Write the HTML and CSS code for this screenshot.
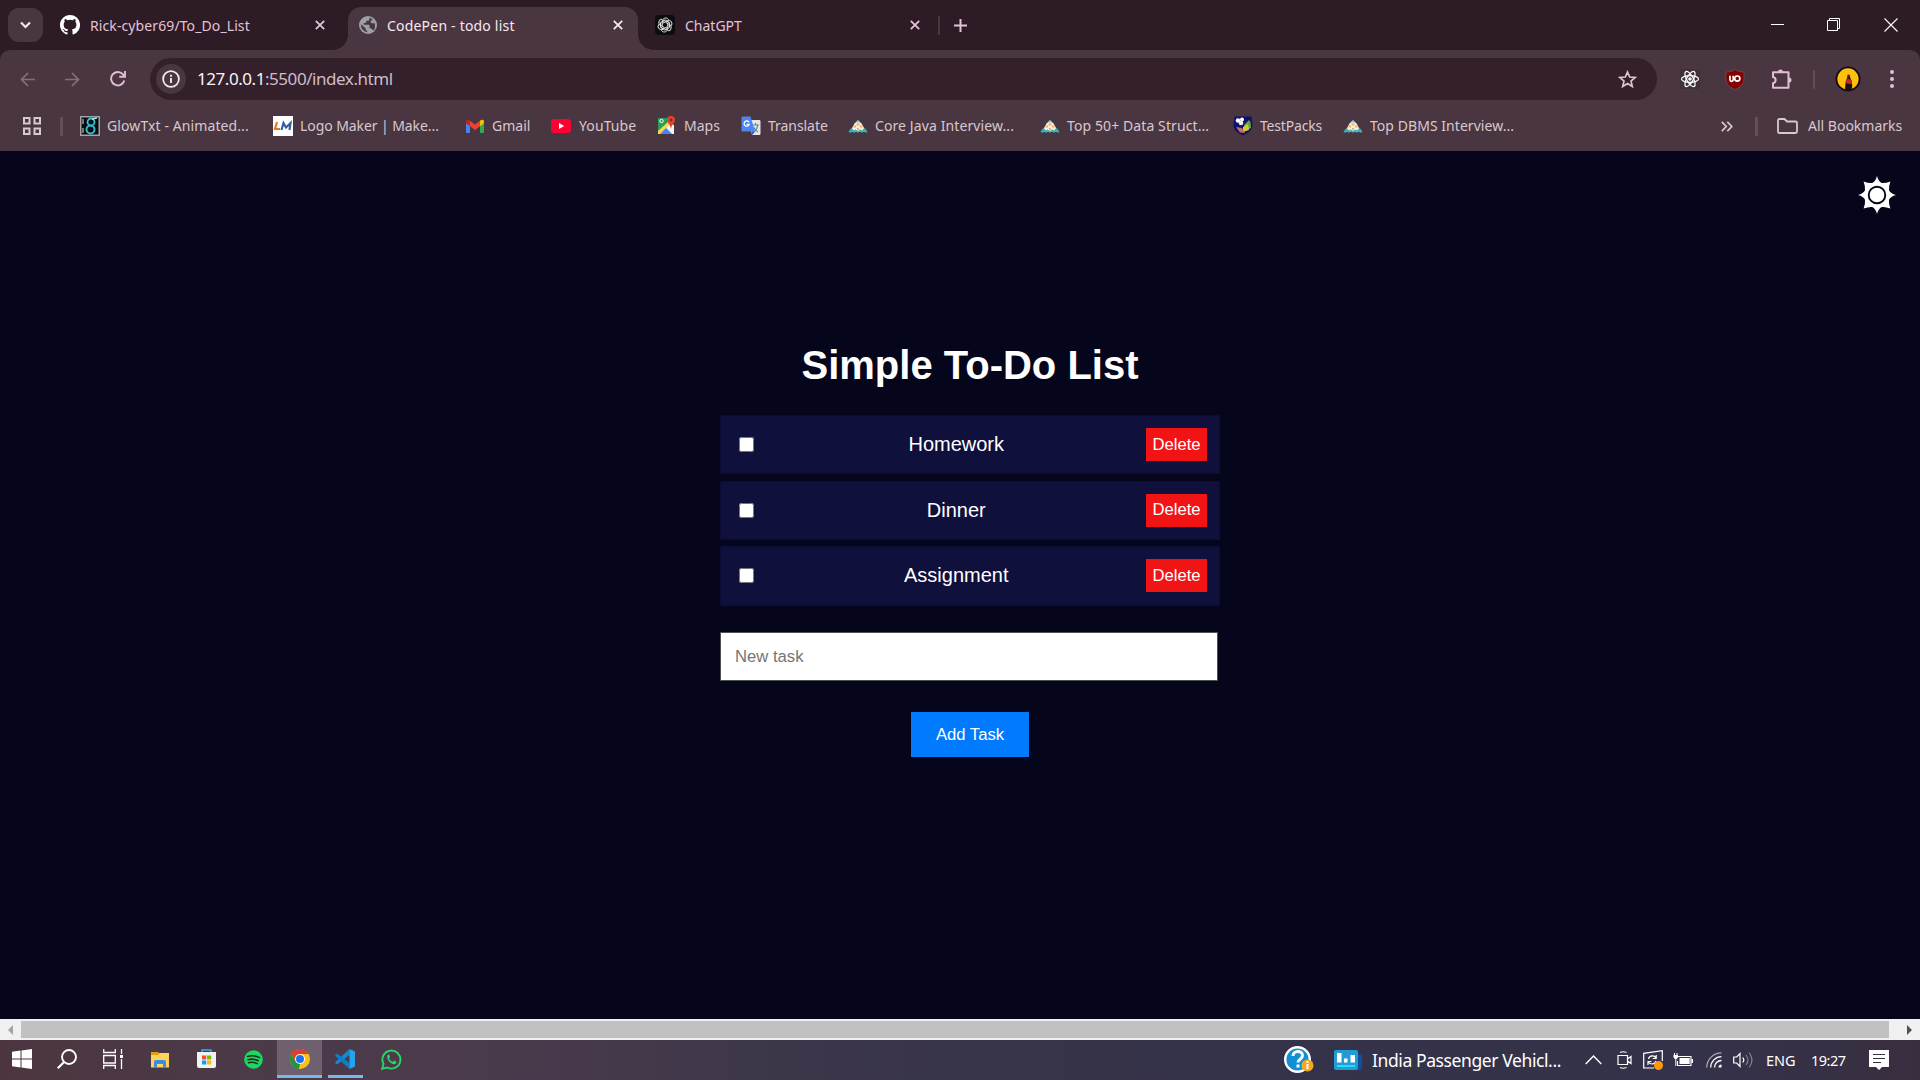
FILE: index.html
```html
<!DOCTYPE html>
<html lang="en">
<head>
<meta charset="utf-8">
<title>CodePen - todo list</title>
<link rel="stylesheet" href="styles.css">
</head>
<body>
<svg width="0" height="0" class="defs">
  <defs>
    <symbol id="x" viewBox="0 0 10 10"><path d="M.8.8l8.4 8.4M9.2.8L.8 9.2" fill="none" stroke="currentColor" stroke-width="1.8"/></symbol>
    <symbol id="pyramid" viewBox="0 0 20 20"><path d="M10 4.500l3.500 3 4.500 8H2l4.500-8z" fill="#f6efe6"/><path d="M10 4l2.500 2.500h-5z" fill="#7fd4d6"/><path d="M8.500 7.500h3v2h-3zM5.500 9.500h2.500v2H5.500zM12 9.500h2.500v2H12zM9 12h2v2H9z" fill="#f5ad58"/><path d="M.5 16l2-3.200h2L6 14.500 7.500 13.500 10 15l2.500-1.500L14 14.500l1.500-1.700h2l2 3.200-1.500.7-2-.9-2 .9-2-.9-2 .9-2-.9-2 .9-2-.9-1.500.9z" fill="#35b5b8"/></symbol>
  </defs>
</svg>

<header class="tabstrip">
  <button class="tab-search"><svg width="11" height="8" viewBox="0 0 11 8"><path d="M1 1.500l4.500 4.500L10 1.500" fill="none" stroke="currentColor" stroke-width="2.200"/></svg></button>
  <div class="tab tab-first">
    <svg width="20" height="20" viewBox="0 0 16 16"><path fill="#fff" d="M8 0C3.580 0 0 3.580 0 8c0 3.540 2.290 6.530 5.470 7.590.4.070.55-.17.55-.38v-1.490c-2.010.37-2.530-.49-2.690-.94-.09-.23-.48-.94-.82-1.130-.28-.15-.68-.52-.01-.53.63-.01 1.080.58 1.230.82.72 1.210 1.870.87 2.330.66.070-.52.28-.87.51-1.070-1.780-.2-3.640-.89-3.640-3.950 0-.87.31-1.590.82-2.150-.08-.2-.36-1.020.08-2.120 0 0 .67-.21 2.200.82a7.600 7.600 0 0 1 4 0c1.530-1.040 2.200-.82 2.200-.82.44 1.100.16 1.920.08 2.120.51.56.82 1.270.82 2.150 0 3.070-1.870 3.750-3.650 3.950.29.25.54.73.54 1.480v2.200c0 .21.15.46.55.38A8 8 0 0 0 8 0z"/></svg>
    <span class="tab-title t-repo">Rick-cyber69/To_Do_List</span>
    <svg class="close" width="10" height="10"><use href="#x"/></svg>
  </div>
  <div class="tab tab-active">
    <svg width="18" height="18" viewBox="0 0 18 18"><circle cx="9" cy="9" r="9" fill="#9aa0a6"/><path d="M10.500 1.800v1.400c0 .9-.7 1.500-1.600 1.500H7.200v1.600c0 .5-.4.800-.9.800H4.700v1.700h5c.5 0 .9.400.9.900v2.500h.8c.8 0 1.400.5 1.600 1.200l1.800 1A7.300 7.300 0 0 0 16 9.500c0-.8-.1-1.500-.3-2.200h-2.500c-.8 0-1.400-.6-1.400-1.400V4.500L14 4A7.200 7.200 0 0 0 10.500 1.800zM1.900 8.200A7.200 7.200 0 0 0 8.200 16.200v-1.500c-.9 0-1.600-.7-1.600-1.600v-.8z" fill="#4a3641"/></svg>
    <span class="tab-title t-codepen">CodePen - todo list</span>
    <svg class="close" width="10" height="10"><use href="#x"/></svg>
  </div>
  <div class="tab tab-last">
    <svg width="20" height="20" viewBox="0 0 20 20"><rect width="20" height="20" rx="4" fill="#0d0d0d"/><g fill="none" stroke="#e6e6e6" stroke-width=".9"><path id="petal" d="M7.400 10.800V6.500c0-4 5-4.700 6.200-1.600M7.400 6.800l3-1.700 4 2.300"/><use href="#petal" transform="rotate(60 10 10)"/><use href="#petal" transform="rotate(120 10 10)"/><use href="#petal" transform="rotate(180 10 10)"/><use href="#petal" transform="rotate(240 10 10)"/><use href="#petal" transform="rotate(300 10 10)"/></g></svg>
    <span class="tab-title t-gpt">ChatGPT</span>
    <svg class="close" width="10" height="10"><use href="#x"/></svg>
  </div>
  <i class="tab-divider"></i>
  <svg class="new-tab" width="13" height="13" viewBox="0 0 13 13"><path d="M6.500 0v13M0 6.500h13" stroke="currentColor" stroke-width="2"/></svg>
  <div class="window-buttons">
    <svg width="13" height="14"><path d="M0 6.500h13" stroke="#fff"/></svg>
    <svg width="13" height="13"><path d="M.5 2.500h10v10H.5zM2.500 2.500v-2h10v10h-2" fill="none" stroke="#fff"/></svg>
    <svg width="14" height="14"><path d="M.5.5l13 13M13.500.5l-13 13" stroke="#fff" stroke-width="1.100"/></svg>
  </div>
</header>

<section class="toolbar">
  <nav class="nav-buttons">
    <svg class="dim" width="15" height="15" viewBox="0 0 15 15"><path d="M15 7.500H1.500M8 1L1.500 7.500 8 14" fill="none" stroke="currentColor" stroke-width="1.700"/></svg>
    <svg class="dim" width="15" height="15" viewBox="0 0 15 15"><path d="M0 7.500h13.500M7 1l6.500 6.500L7 14" fill="none" stroke="currentColor" stroke-width="1.700"/></svg>
    <svg width="16" height="16" viewBox="0 0 16 16"><path d="M14.300 9.500A6.700 6.700 0 1 1 12.800 3.200L14.500 5M15 0v5.800H9.300" fill="none" stroke="currentColor" stroke-width="1.900"/></svg>
  </nav>
  <div class="omnibox">
    <span class="site-info"><svg width="18" height="18" viewBox="0 0 18 18"><circle cx="9" cy="9" r="7.900" fill="none" stroke="currentColor" stroke-width="1.800"/><path d="M9 8v5M9 4.800v2" stroke="currentColor" stroke-width="1.900"/></svg></span>
    <span class="url"><b>127.0.0.1</b>:5500/index.html</span>
    <svg class="star" width="19" height="18" viewBox="0 0 19 18"><path d="M9.500 2l2.200 5 5.500.5-4.200 3.600 1.300 5.400-4.800-2.900-4.800 2.900L6 11.100 1.800 7.500 7.300 7z" fill="none" stroke="currentColor" stroke-width="1.700"/></svg>
  </div>
  <div class="extensions">
    <svg width="20" height="20" viewBox="0 0 20 20"><rect width="20" height="20" rx="2" fill="#40303a"/><g fill="none" stroke="#fff" stroke-width="1.200"><ellipse cx="10" cy="10" rx="8.500" ry="3.300"/><ellipse cx="10" cy="10" rx="8.500" ry="3.300" transform="rotate(60 10 10)"/><ellipse cx="10" cy="10" rx="8.500" ry="3.300" transform="rotate(120 10 10)"/></g><circle cx="10" cy="10" r="1.800" fill="#fff"/></svg>
    <svg width="20" height="21" viewBox="0 0 20 21"><path d="M10 .5c2.500 1.800 5.500 2.500 9 2.500v7c0 5-4 8.500-9 10.500C5 18.500 1 15 1 10V3c3.500 0 6.500-.7 9-2.500z" fill="#800000" stroke="#7c4a52" stroke-width=".8"/><path d="M5 6.800v4c0 1 .6 1.500 1.500 1.500s1.700-.5 1.700-1.500v-4" fill="none" stroke="#fff" stroke-width="1.700"/><circle cx="12.300" cy="9.600" r="2.600" fill="none" stroke="#fff" stroke-width="1.700"/></svg>
    <svg width="22" height="21" viewBox="0 0 22 21"><path d="M2 3.300h15.500v15.500H2v-4.600c3.500-.5 3.500-5.700 0-6.200z" fill="none" stroke="currentColor" stroke-width="2" stroke-linejoin="round"/><path d="M7 3a2.500 2.500 0 0 1 5 0zM18 8.500a2.500 2.500 0 0 1 0 5z" fill="currentColor"/></svg>
    <i class="bar-divider slim"></i>
    <svg width="26" height="26" viewBox="0 0 26 26"><circle cx="13" cy="13" r="11.600" fill="#ffbf0a" stroke="#120d18" stroke-width="1.900"/><path d="M10 24l.3-5 1-5 1.900-4.500 1.500.5 1.500 4.500 1 5-.2 4.500z" fill="#1c1015"/><path d="M10.500 15.500l2.500-3 4 2v3l-2.500.5-4-1z" fill="#c02c2c"/><circle cx="13.600" cy="10" r="1.500" fill="#4b2710"/></svg>
    <svg width="4" height="18"><g fill="currentColor"><circle cx="2" cy="2" r="2"/><circle cx="2" cy="9" r="2"/><circle cx="2" cy="16" r="2"/></g></svg>
  </div>
</section>

<nav class="bookmarks">
  <svg class="apps" width="18" height="18" viewBox="0 0 18 18"><path d="M1 1h5.500v5.500H1zM11.500 1H17v5.500h-5.500zM1 11.500h5.500V17H1zM11.500 11.500H17V17h-5.500z" fill="none" stroke="currentColor" stroke-width="2"/></svg>
  <i class="bar-divider"></i>
  <a><svg width="20" height="20" viewBox="0 0 20 20"><rect x=".75" y=".75" width="18.500" height="18.500" fill="#080c10" stroke="#a3a3a3" stroke-width="1.500"/><path d="M3 3v5M3 12v5" stroke="#777" stroke-width="2"/><circle cx="11" cy="6" r="3.500" fill="none" stroke="#37c5d8" stroke-width="1.800"/><circle cx="10.500" cy="13.500" r="4" fill="none" stroke="#35b9cd" stroke-width="2"/><path d="M12 3l5-1" stroke="#a5eef5" stroke-width="1.500"/></svg><span class="b1">GlowTxt - Animated...</span></a>
  <a><svg width="20" height="20" viewBox="0 0 20 20"><path fill="#fff" d="M0 0h20v20H0z"/><path d="M4 6L2 13h5" fill="none" stroke="#e07a20" stroke-width="2.200"/><path d="M8.500 14l2-7 2.500 4.500L17.500 7l-1 7" fill="none" stroke="#355f9c" stroke-width="2.200"/></svg><span class="b2">Logo Maker | Make...</span></a>
  <a><svg width="20" height="20" viewBox="0 0 20 20"><path d="M1 5.500l4 3V17H2.300C1.500 17 1 16.500 1 15.700z" fill="#4285f4"/><path d="M15 8.500l4-3v10.200c0 .8-.5 1.300-1.300 1.300H15z" fill="#34a853"/><path d="M15 4.700C17 3 19 3.700 19 5.500v1.700l-4 3z" fill="#fbbc04"/><path d="M5 4.700l5 3.800 5-3.800v5.500L10 14l-5-3.800z" fill="#ea4335"/><path d="M5 4.700C3 3 1 3.700 1 5.500v1.700l4 3z" fill="#c5221f"/></svg><span class="b3">Gmail</span></a>
  <a><svg width="20" height="20" viewBox="0 0 20 20"><rect y="3" width="20" height="14" rx="3.500" fill="#ff0033"/><path d="M8 7l5.200 3L8 13z" fill="#fff"/></svg><span class="b4">YouTube</span></a>
  <a><svg width="20" height="20" viewBox="0 0 20 20"><path d="M1 2h15v16H1z" fill="#2d9b58"/><path d="M1 18L15 4l2 14z" fill="#dfe4e8"/><path d="M1 15L12 5l2 2L3 18H1z" fill="#fdd54a"/><path d="M3 18l6-6 6 6z" fill="#4285f4"/><path d="M9.500 11.500L16 18h1V9l-3-1z" fill="#f5f5f5"/><circle cx="4.500" cy="5" r="1.700" fill="none" stroke="#fff"/><path d="M14 0a4 4 0 0 1 4 4c0 2.500-3 4-4 8.500-1-4.500-4-6-4-8.500a4 4 0 0 1 4-4z" fill="#e34133"/><circle cx="14" cy="4" r="1.400" fill="#8d251d"/></svg><span class="b5">Maps</span></a>
  <a><svg width="20" height="20" viewBox="0 0 20 20"><path d="M8 4h10c1 0 1.500.5 1.500 1.500v12c0 1-.5 1.500-1.500 1.500h-7z" fill="#e3e5e8"/><path d="M11 9h7M14.500 7v2M12.500 16c2-1 3.800-3.500 4-7M12.500 11c1 2.500 2.500 4 4.500 5" fill="none" stroke="#6d7c88" stroke-width="1.100"/><path d="M2 .5h7.500L14 15.500H2C1 15.500.5 15 .5 14V2C.5 1 1 .5 2 .5z" fill="#4d86ef"/><path d="M10.500 15.500H14L11.500 19z" fill="#2a56c6"/><path d="M8 6.300A2.600 2.600 0 1 0 8.200 8.400H5.800" fill="none" stroke="#fff" stroke-width="1.300"/></svg><span class="b6">Translate</span></a>
  <a><svg width="20" height="20"><use href="#pyramid"/></svg><span class="b7">Core Java Interview...</span></a>
  <a><svg width="20" height="20"><use href="#pyramid"/></svg><span class="b8">Top 50+ Data Struct...</span></a>
  <a><svg width="20" height="20" viewBox="0 0 20 20"><path d="M1.500.5h17l1 8c0 6-4 8.500-9.500 11-5.500-2.500-9.500-5-9.500-11z" fill="#101070"/><circle cx="5" cy="4.500" r="2.300" fill="#fff"/><circle cx="9" cy="3.500" r="2" fill="#fff"/><circle cx="8" cy="7" r="2.300" fill="#eee"/><path d="M11 9l5-5 1.500 2 .5 6-6 3z" fill="#61a83b"/><path d="M10 11l5-3 1 6-6 2z" fill="#d9c932"/><path d="M3 11l6 1 3 5-5-.5z" fill="#bd7354"/></svg><span class="b9">TestPacks</span></a>
  <a><svg width="20" height="20"><use href="#pyramid"/></svg><span class="b10">Top DBMS Interview...</span></a>
  <svg width="12" height="11" viewBox="0 0 12 11"><path d="M.8.8l4.500 4.700L.8 10.200M6.300.8l4.500 4.700-4.500 4.700" fill="none" stroke="currentColor" stroke-width="1.700"/></svg>
  <i class="bar-divider"></i>
  <a class="all"><svg width="21" height="16" viewBox="0 0 21 16"><path d="M1 13V2.500Q1 1 2.500 1h5l2.500 2.500h8.500Q20 3.500 20 5v8.500q0 1.500-1.500 1.500h-16Q1 15 1 13.500z" fill="none" stroke="currentColor" stroke-width="1.800"/></svg><span class="b11">All Bookmarks</span></a>
</nav>

<main class="page">
  <svg class="theme-toggle" width="38" height="38" viewBox="-19 -19 38 38"><path fill="#fff" d="M0-19Q1.500-13.500 4.800-12 8-11.500 13.400-13.400 11.500-8 12-4.800 13.500-1.500 19 0 13.500 1.500 12 4.800 11.500 8 13.400 13.400 8 11.500 4.800 12 1.500 13.500 0 19-1.500 13.500-4.800 12-8 11.500-13.400 13.400-11.500 8-12 4.800-13.500 1.500-19 0-13.500-1.500-12-4.800-11.500-8-13.400-13.400-8-11.500-4.800-12-1.500-13.500 0-19z"/><circle r="8.300" fill="#fff" stroke="#05051b" stroke-width="1.900"/></svg>
  <div class="todo">
    <h1>Simple To-Do List</h1>
    <ul>
      <li><input type="checkbox"><span>Homework</span><button>Delete</button></li>
      <li><input type="checkbox"><span>Dinner</span><button>Delete</button></li>
      <li><input type="checkbox"><span>Assignment</span><button>Delete</button></li>
    </ul>
    <input class="new-task" type="text" placeholder="New task">
    <button class="add-task">Add Task</button>
  </div>
</main>

<div class="scrollbar">
  <svg width="5" height="10"><path d="M5 0v10L0 5z" fill="#a3a3a3"/></svg>
  <i></i>
  <svg width="5" height="10"><path d="M0 0v10l5-5z" fill="#505050"/></svg>
</div>

<footer class="taskbar">
  <div class="apps-row">
    <span><svg width="20" height="20" viewBox="0 0 20 20"><path fill="#fff" d="M0 2.700l8.500-1.200v8H0zM9.500 1.400L20 0v9.500H9.500zM0 10.500h8.500v8L0 17.300zM9.500 10.500H20V20L9.500 18.600z"/></svg></span>
    <span><svg width="20" height="20" viewBox="0 0 20 20"><circle cx="12" cy="8" r="7" fill="none" stroke="#fff" stroke-width="1.900"/><path d="M7 13L.8 19.200" stroke="#fff" stroke-width="2.200"/></svg></span>
    <span><svg width="21" height="20" viewBox="0 0 21 20"><path d="M.7 0v3.500h11.600V0M.7 20v-3.500h11.600V20M.7 6.500h11.600v7.500H.7zM18.500 0v5M18.500 10v10" fill="none" stroke="#fff" stroke-width="1.300"/><path d="M17 6h3v3h-3z" fill="#fff"/></svg></span>
    <span><svg width="19" height="17" viewBox="0 0 19 17"><path d="M0 1h7l2 2v4H0z" fill="#e09d0c"/><path d="M0 4h7l1.500-2H18v14.500H0z" fill="#ffd35c"/><path d="M3 17V11q0-2 2-2h8q2 0 2 2v6h-3v-4H6v4z" fill="#3c8ddd"/></svg></span>
    <span><svg width="19" height="20" viewBox="0 0 19 20"><path d="M5 4V1h9v3" fill="none" stroke="#2fb3ea" stroke-width="1.400"/><path d="M0 3h19v14q0 2-2 2H2q-2 0-2-2z" fill="#f1f1f3"/><path d="M5 6.500h4.200v4H5z" fill="#f25022"/><path d="M10 6.500h4.200v4H10z" fill="#7fba00"/><path d="M5 11.500h4.200v4H5z" fill="#00a4ef"/><path d="M10 11.500h4.200v4H10z" fill="#ffb900"/></svg></span>
    <span><svg width="19" height="19" viewBox="0 0 19 19"><circle cx="9.500" cy="9.500" r="9.300" fill="#1ed760"/><path d="M3.500 6.500c4-1.200 8.500-.8 12 1.100M4 9.700c3.500-1 7-.6 10.300 1M4.500 12.700c3-.7 5.800-.5 8.700.9" fill="none" stroke="#16331f" stroke-width="1.600" stroke-linecap="round"/></svg></span>
    <span class="current"><svg width="20" height="20" viewBox="0 0 20 20"><circle cx="10" cy="10" r="10" fill="#fbc116"/><path d="M1.300 5A10 10 0 0 1 18.700 5H10v5L5.700 12.500z" fill="#e33b2e"/><path d="M1.300 5l4.400 7.500L10 15l-1 4.900A10 10 0 0 1 1.300 5z" fill="#229342"/><path d="M14.300 12.500L10 20H9l3-6z" fill="#fbc116"/><circle cx="10" cy="10" r="5" fill="#fff"/><circle cx="10" cy="10" r="4" fill="#1a73e8"/></svg></span>
    <span class="open"><svg width="20" height="20" viewBox="0 0 20 20"><path d="M14.500 0v6L2 15.500.3 14v-1z" fill="#1689cf"/><path d="M14.500 20v-6L2 4.500.3 6v1z" fill="#0f7fc6"/><path d="M14.500 0L20 2.500v15L14.500 20z" fill="#27a3ee"/></svg></span>
    <span><svg width="21" height="21" viewBox="0 0 21 21"><path d="M1.200 19.800l1.300-4.900a9 9 0 1 1 3.600 3.600z" fill="none" stroke="#2bd368" stroke-width="1.900"/><path d="M7.300 5.500c-3 2.500.7 9 5.700 9.800 1.600.1 2.500-1 2.500-2.500l-2.600-1.300-1.300 1.400c-1.700-.7-2.900-1.900-3.600-3.600l1.100-1.200L8.200 5.500z" fill="#2bd368"/></svg></span>
  </div>
  <div class="tray">
    <svg width="30" height="28" viewBox="0 0 30 28"><circle cx="13.500" cy="13.500" r="12.300" fill="#0f91d4" stroke="#fff" stroke-width="2.400"/><path d="M9 10c0-6 9.500-6 9.500-.5 0 4-4.500 3.500-4.500 7M14 18.500v3" fill="none" stroke="#fff" stroke-width="3"/><circle cx="23.500" cy="19.500" r="6" fill="#f7a81b"/><path d="M23.500 18v5M23.500 15v2" stroke="#fff" stroke-width="2"/></svg>
    <svg width="28" height="21" viewBox="0 0 28 21"><path d="M22 4h3q3 0 3 3v10q0 3-3 3h-3z" fill="#0d4fa0"/><rect width="24" height="20" rx="2" fill="#239bd3"/><path d="M3 3h4.500v9.500H3zM10 8.500h3.500v4H10zM16.500 5H21v7.500h-4.500z" fill="#fff"/><path d="M3 16h18" stroke="#24e0f8" stroke-width="2"/></svg>
    <span class="news">India Passenger Vehicl...</span>
    <svg width="17" height="10" viewBox="0 0 17 10"><path d="M.7 9l7.800-8 7.800 8" fill="none" stroke="#fff" stroke-width="1.400"/></svg>
    <svg width="15" height="18" viewBox="0 0 15 18"><path d="M1 4.500h9.500v9H1zM10.500 8l3.500-2.500v7L10.500 10M3 1.500q3-1.500 6.500 0M3 16.500q3 1.500 6.500 0" fill="none" stroke="#fff" stroke-width="1.200"/></svg>
    <svg width="20" height="20" viewBox="0 0 20 20"><path d="M11 18H.7V3.300L19.300.7V11" fill="none" stroke="#fff" stroke-width="1.200"/><path d="M5.500 9c1-4 6-4 7.500-1M13.200 5v3.500h-3.500M13 11c-1 3.500-5.500 4-7.500 1M5 15v-3.500h3.500" fill="none" stroke="#fff" stroke-width="1.200"/><circle cx="15.500" cy="15.500" r="4.500" fill="#ff9808"/></svg>
    <svg width="20" height="14" viewBox="0 0 20 14"><path d="M5 3.500h13v9H4.500V8" fill="none" stroke="#fff" stroke-width="1.100"/><path d="M6.500 5h10.200v6H6.500zM18.500 6h1.500v4h-1.500zM.5 2H5v2.500L3.500 6H2L.5 4.500zM1 0h1v2H1zM3.500 0h1v2h-1zM2.300 6h1v7h-1z" fill="#fff"/></svg>
    <svg width="16" height="16" viewBox="0 0 16 16"><g fill="none" stroke-width="1.300"><path d="M.8 15.500A14.700 14.700 0 0 1 15.500.8" stroke="#aaa6b0"/><path d="M4.700 15.500A10.800 10.800 0 0 1 15.500 4.700M8.500 15.500a7 7 0 0 1 7-7" stroke="#fff"/></g><path d="M12.500 15.500a3 3 0 0 1 3-3v3z" fill="#fff"/></svg>
    <svg width="20" height="18" viewBox="0 0 20 18"><path d="M.7 6h3L7 2.500v13L3.700 12h-3z" fill="none" stroke="#fff" stroke-width="1.200"/><path d="M9.800 6.500q2 2.500 0 5" fill="none" stroke="#fff" stroke-width="1.200"/><path d="M13 4q4 5 0 10M16 1.500q6 7.500 0 15" fill="none" stroke="#85808c" stroke-width="1.200"/></svg>
    <span class="lang">ENG</span>
    <span class="clock">19:27</span>
    <svg width="20" height="20" viewBox="0 0 20 20"><path d="M0 0h20v17h-7l-3 3-3-3H0z" fill="#fff"/><path d="M4 4.500h12M4 8.500h12M4 12.500h8" stroke="#353146" stroke-width="1.200"/></svg>
  </div>
</footer>
</body>
</html>
```
FILE: styles.css
```css
* { box-sizing: border-box; }
body {
  margin: 0;
  width: 1920px;
  height: 1080px;
  overflow: hidden;
  display: flex;
  flex-direction: column;
  background: #2d1b26;
  font-family: "Noto Sans", "Open Sans", sans-serif;
  color: #d6bfca;
}
svg { display: block; flex: none; }
.defs { position: absolute; }
button { border: 0; padding: 0; font: inherit; color: inherit; }

/* Tab strip */
.tabstrip { height: 50px; display: flex; padding-left: 8px; color: #e4c3d4; }
.tab-search {
  width: 35px; height: 34px; margin-top: 8px;
  border-radius: 11px; background: #4a3641; color: #f5e4ec;
  display: grid; place-items: center;
}
.tab { display: flex; align-items: center; height: 50px; }
.tab .close { margin-left: auto; }
.tab-title { font-size: 14px; line-height: 20px; white-space: nowrap; margin-top: 1px; }
.tab-first { width: 265px; margin-left: 17px; }
.tab-first .tab-title { margin-left: 10px; letter-spacing: .1px; }
.tab-active {
  position: relative; width: 290px; height: 43px; margin: 7px 0 0 23px;
  padding: 0 15px 7px 11px; border-radius: 13px 13px 0 0;
  background: #4a3641; color: #f6e9f0;
}
.tab-active .tab-title { margin-left: 10px; letter-spacing: .2px; }
.tab-active::before, .tab-active::after {
  content: ""; position: absolute; bottom: 0; width: 15px; height: 15px;
}
.tab-active::before { left: -15px; background: radial-gradient(circle at 0 0, transparent 14.500px, #4a3641 15px); }
.tab-active::after { right: -15px; background: radial-gradient(circle at 100% 0, transparent 14.500px, #4a3641 15px); }
.tab-last { width: 265px; margin-left: 17px; }
.tab-last .tab-title { margin-left: 10px; }
.tab-divider { width: 2px; height: 19px; margin: 16px 0 0 18px; background: #4a3641; }
.new-tab { margin: 19px 0 0 14px; }
.window-buttons { display: flex; gap: 43px; margin: 18px 22px 0 auto; }
.window-buttons svg:last-child { margin-left: 1px; }

/* Toolbar */
.toolbar {
  height: 58px; padding-top: 8px; display: flex;
  background: #4a3641; border-radius: 10px 10px 0 0; color: #e2bfd0;
}
.nav-buttons { width: 150px; height: 42px; padding-left: 20px; display: flex; align-items: center; gap: 30px; }
.nav-buttons .dim { color: #84707b; }
.omnibox {
  width: 1507px; height: 42px; border-radius: 21px; padding: 0 20px 0 6px;
  display: flex; align-items: center; background: #33202b;
}
.site-info {
  width: 30px; height: 30px; border-radius: 50%; background: #4a3641; color: #f4e6ed;
  display: grid; place-items: center;
}
.url { margin: -1px 0 0 11px; font-size: 17px; color: #d0bcc6; white-space: nowrap; letter-spacing: -.45px; }
.url b { font-weight: 400; color: #fbf3f7; }
.star { margin-left: auto; color: #dcc5d0; }
.extensions {
  height: 42px; margin-left: 23px; display: grid; align-items: center;
  grid-template-columns: 45px 46px 42px 22px 55px 4px;
}

/* Bookmarks bar */
.bookmarks {
  height: 43px; padding: 0 0 7px 23px; background: #4a3641; color: #d8c8d0;
  display: grid; align-items: center; font-size: 14px;
  grid-template-columns: 37px 20px 193px 192px 86px 106px 84px 107px 192px 193px 110px 378px 34px 22px 143px;
}
.bookmarks a { display: flex; align-items: center; gap: 7px; white-space: nowrap; }
.bookmarks a span { line-height: 20px; margin-top: -1px; }
.bookmarks .all { gap: 10px; }
.b1 { letter-spacing: .1px; }
.b2 { letter-spacing: -.08px; }
.bookmarks .b4 { margin-left: 1px; letter-spacing: .1px; }
.b6 { letter-spacing: -.05px; }
.b7, .b8 { letter-spacing: .1px; }
.b9 { letter-spacing: -.18px; }
.b10 { letter-spacing: .05px; }
.bar-divider { width: 3px; height: 19px; border-radius: 1px; background: #654d5a; }
.bar-divider.slim { width: 2px; }

/* To-do page */
.page {
  position: relative; height: 868px; padding-top: 188px; background: #05051b; color: #fff;
  font-family: "Liberation Sans", Arial, sans-serif;
}
.theme-toggle { position: absolute; right: 24px; top: 25px; }
.todo { width: 500px; margin-left: 720px; display: flex; flex-direction: column; }
.todo h1 { margin: 3px 0 27px; font-size: 40px; line-height: 46px; text-align: center; white-space: nowrap; }
.todo ul { list-style: none; margin: 0; padding: 0; display: grid; gap: 6.500px; }
.todo li {
  height: 59.200px; padding: 0 12px 0 18px; display: flex; justify-content: space-between; align-items: center;
  background: #10103d; border: 1px solid #0c0c33; font-size: 20px;
}
.todo li input { margin: 0 12.500px 0 0; width: 15px; height: 15px; }
.todo li button { width: 61px; height: 33px; background: #f21414; font-size: 16.670px; color: #fff; }
.new-task {
  width: 498px; height: 49px; margin-top: 26.400px; padding: 2px 14px 0;
  background: #fff; border: 1px solid #505050; font: 16.670px "Liberation Sans", Arial, sans-serif;
}
.new-task::placeholder { color: #757575; }
.add-task { width: 118px; height: 45px; margin: 31px auto 0; padding-top: 2px; background: #007bff; color: #fff; font-size: 16.670px; }

/* Horizontal scrollbar */
.scrollbar { height: 21px; display: flex; align-items: center; padding: 0 8px; background: #f0f0f0; }
.scrollbar i { width: 1868px; height: 17px; margin: 0 18px 0 8px; background: #c1c1c1; }

/* Taskbar */
.taskbar {
  height: 40px; display: flex; color: #fff;
  background: linear-gradient(90deg, #4c3540 0, #4b3a48 240px, #4a3b4c 480px, #3a3549 850px, #353349 1200px, #34324a 1700px, #392e3f 1920px);
}
.apps-row { width: 1284px; display: grid; grid-template-columns: 44px 46px 46px 48px 45px 48px 45px 46px 46px; }
.apps-row span { display: grid; place-items: center; height: 38px; }
.apps-row .current { background: #6e606f; border-bottom: 3px solid #76b9ed; padding-top: 3px; }
.apps-row .open { padding-top: 0; background: linear-gradient(#76b9ed, #76b9ed) center bottom / 35px 3px no-repeat; }
.tray {
  display: grid; align-items: center; height: 40px; white-space: nowrap;
  grid-template-columns: 50px 38px 213px 32px 26px 30px 33px 27px 33px 45px 58px 20px;
}
.news { font-size: 17.500px; letter-spacing: -.4px; }
.lang { font-size: 14.500px; }
.clock { font-size: 14.500px; letter-spacing: -.5px; }
```
